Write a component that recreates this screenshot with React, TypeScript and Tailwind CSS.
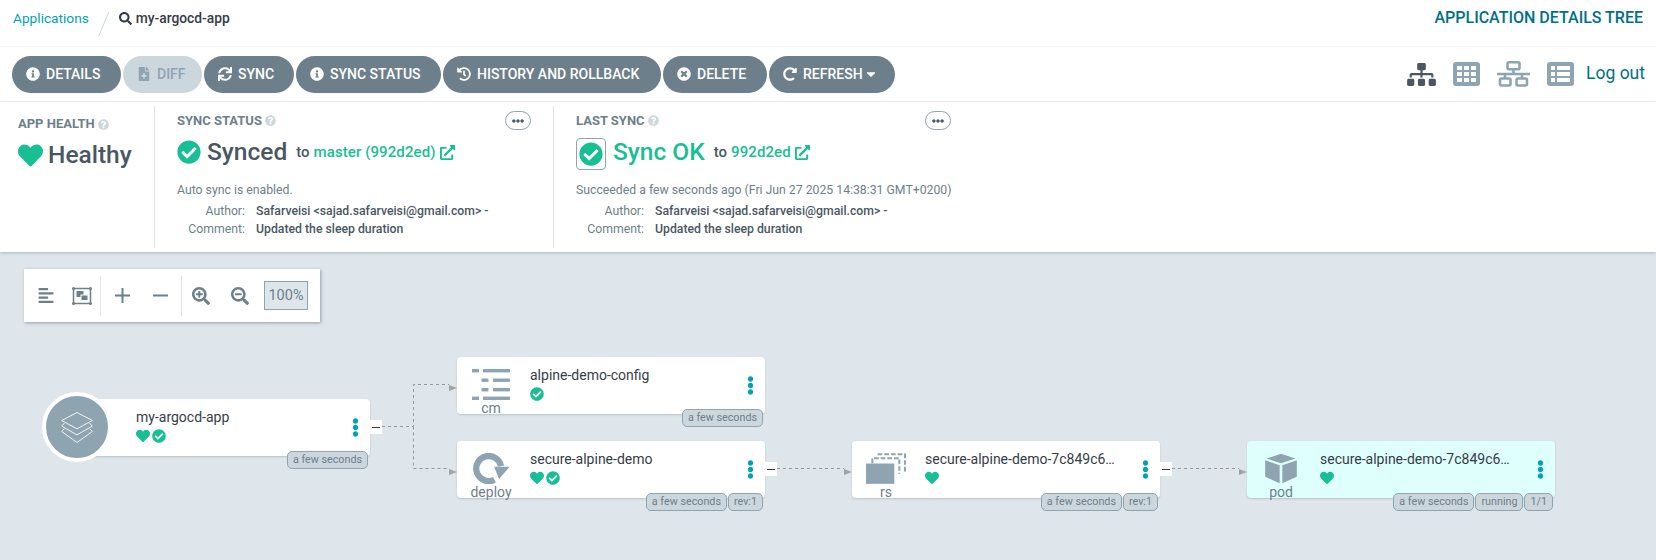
import type { ReactNode } from "react";
import type { IconType } from "react-icons";
import {
	FaAlignLeft,
	FaCaretDown,
	FaCheckCircle,
	FaEllipsisH,
	FaEllipsisV,
	FaExternalLinkAlt,
	FaFileMedical,
	FaHeart,
	FaHistory,
	FaInfoCircle,
	FaQuestionCircle,
	FaRedoAlt,
	FaSearch,
	FaSearchMinus,
	FaSearchPlus,
	FaSitemap,
	FaSync,
	FaTimesCircle,
} from "react-icons/fa";

const actions: { label: string; icon: IconType; width: string; disabled?: boolean; caret?: boolean }[] = [
	{ label: "DETAILS", icon: FaInfoCircle, width: "w-[109px]" },
	{ label: "DIFF", icon: FaFileMedical, width: "w-[79px]", disabled: true },
	{ label: "SYNC", icon: FaSync, width: "w-[90px]" },
	{ label: "SYNC STATUS", icon: FaInfoCircle, width: "w-[145px]" },
	{ label: "HISTORY AND ROLLBACK", icon: FaHistory, width: "w-[218px]" },
	{ label: "DELETE", icon: FaTimesCircle, width: "w-[104px]" },
	{ label: "REFRESH", icon: FaRedoAlt, width: "w-[126px]", caret: true },
];

function ActionButton({ label, icon: Icon, width, disabled, caret }: (typeof actions)[0]) {
	return (
		<button
			className={`flex h-[37px] items-center gap-[6px] rounded-full pl-[14px] text-[14px] font-medium ${width} ${
				disabled ? "bg-[#ccd6dd] text-[#8fa4b1]" : "bg-[#6d7f8b] text-white"
			}`}
		>
			<Icon className="h-[14px] w-auto" />
			{label}
			{caret && <FaCaretDown className="-ml-[3px] h-[14px] w-[10px]" />}
		</button>
	);
}

function GridIcon() {
	return (
		<svg viewBox="0 0 27 24" className="ml-[17px] h-[24px] w-[27px]">
			<rect width="27" height="24" rx="3" fill="#8fa4b1" />
			<g fill="#fff">
				<rect x="4" y="4" width="5" height="4" />
				<rect x="11" y="4" width="5" height="4" />
				<rect x="18" y="4" width="5" height="4" />
				<rect x="4" y="10" width="5" height="4" />
				<rect x="11" y="10" width="5" height="4" />
				<rect x="18" y="10" width="5" height="4" />
				<rect x="4" y="16" width="5" height="4" />
				<rect x="11" y="16" width="5" height="4" />
				<rect x="18" y="16" width="5" height="4" />
			</g>
		</svg>
	);
}

function ListIcon() {
	return (
		<svg viewBox="0 0 27 24" className="ml-[17px] h-[24px] w-[27px]">
			<rect width="27" height="24" rx="3" fill="#8fa4b1" />
			<g fill="#fff">
				<rect x="4" y="4" width="4" height="4" />
				<rect x="10" y="4" width="13" height="4" />
				<rect x="4" y="10" width="4" height="4" />
				<rect x="10" y="10" width="13" height="4" />
				<rect x="4" y="16" width="4" height="4" />
				<rect x="10" y="16" width="13" height="4" />
			</g>
		</svg>
	);
}

function NetworkIcon() {
	return (
		<svg viewBox="0 0 33 26" className="ml-[17px] h-[26px] w-[33px]" fill="none" stroke="#8fa4b1" strokeWidth="2.6">
			<rect x="10.5" y="1.3" width="12" height="7" rx="1.5" />
			<path d="M16.5 8v5M8 17v-4M25 17v-4M0 13h33" />
			<rect x="3" y="17.5" width="10.5" height="7" rx="1.5" />
			<rect x="19.5" y="17.5" width="10.5" height="7" rx="1.5" />
		</svg>
	);
}

function CubeIcon() {
	return (
		<svg viewBox="0 0 96 94" className="h-[31px] w-[32px]" fill="#8fa4b1">
			<polygon points="48,2 92,17 48,31 4,17" />
			<polygon points="0,22 44,37 44,92 0,72" />
			<polygon points="52,37 96,22 96,72 52,92" />
		</svg>
	);
}

function SectionTitle({ children }: { children: ReactNode }) {
	return (
		<div className="flex items-center gap-[3px] text-[13px] font-bold leading-[16px] text-[#6d7f8b]">
			{children}
			<FaQuestionCircle className="h-[11px] w-[11px] text-[#ccd6dd]" />
		</div>
	);
}

function MoreButton() {
	return (
		<div className="flex h-[19px] w-[26px] items-center justify-center rounded-full border border-[#8fa4b1] text-[#495763]">
			<FaEllipsisH className="h-[12px] w-[12px]" />
		</div>
	);
}

function CommitRows() {
	return (
		<div className="mt-[3px] grid grid-cols-[68px_1fr] gap-x-[11px] text-[12.25px] leading-[18px] text-[#6d7f8b]">
			<div className="text-right">Author:</div>
			<div className="font-medium text-[#495763]">Safarveisi &lt;sajad.safarveisi@gmail.com&gt; -</div>
			<div className="text-right">Comment:</div>
			<div className="font-medium text-[#495763]">Updated the sleep duration</div>
		</div>
	);
}

function Badge({ children }: { children: ReactNode }) {
	return (
		<span className="flex h-[18px] items-center rounded-[5px] border border-[#8fa4b1] bg-[#ccd6dd] px-[5px] text-[10.75px] leading-none whitespace-nowrap text-[#6d7f8b]">
			{children}
		</span>
	);
}

function CollapseBox({ className }: { className: string }) {
	return (
		<div className={`absolute flex h-[14px] w-[12px] items-center justify-center bg-white ${className}`}>
			<div className="h-px w-[8px] bg-[#363c4a]" />
		</div>
	);
}

function ConfigMapIcon() {
	return (
		<svg viewBox="0 0 38 31" className="h-[31px] w-[38px]" fill="#8fa4b1">
			<rect x="0" y="0" width="7" height="3.4" />
			<rect x="11" y="0" width="27" height="3.4" />
			<rect x="9.5" y="9.5" width="7" height="3.4" />
			<rect x="21" y="9.5" width="17" height="3.4" />
			<rect x="9.5" y="19" width="7" height="3.4" />
			<rect x="21" y="19" width="17" height="3.4" />
			<rect x="0" y="27.6" width="7" height="3.4" />
			<rect x="11" y="27.6" width="27" height="3.4" />
		</svg>
	);
}

function DeployIcon() {
	return (
		<svg viewBox="0 0 110 94" className="h-[31px] w-[37px]">
			<path d="M64 81A38 38 0 1 1 84 40" fill="none" stroke="#8fa4b1" strokeWidth="19" />
			<polygon points="63,42 110,42 78,79" fill="#8fa4b1" />
		</svg>
	);
}

function ReplicaSetIcon() {
	return (
		<svg viewBox="0 0 120 92" className="h-[31px] w-[40px]" fill="none" stroke="#8fa4b1" strokeWidth="6" strokeDasharray="14 6">
			<path d="M19 30V15H100V62" />
			<path d="M35 3H117V60" />
			<rect x="0" y="31" width="85" height="61" fill="#8fa4b1" stroke="none" />
		</svg>
	);
}

function GraphNode({
	className,
	icon,
	kind,
	name,
	heart,
	check,
	badges,
}: {
	className: string;
	icon: ReactNode;
	kind: string;
	name: string;
	heart?: boolean;
	check?: boolean;
	badges: string[];
}) {
	return (
		<div className={`absolute flex h-[57px] rounded-[4px] shadow-[0_1px_2px_rgba(77,92,105,0.25)] ${className}`}>
			<div className="flex w-[68px] shrink-0 flex-col items-center pt-[12px]">
				<div className="flex h-[31px] items-center">{icon}</div>
				<div className="mt-[1px] text-[14px] leading-[14px] text-[#6d7f8b]">{kind}</div>
			</div>
			<div className="ml-[5px] min-w-0 w-[190px] pt-[9px]">
				<div className="truncate text-[14px] leading-[18px] text-[#363c4a]">{name}</div>
				<div className="mt-[3px] flex items-center gap-[2px] text-[#18be94]">
					{heart && <FaHeart className="h-[14px] w-[14px]" />}
					{check && <FaCheckCircle className="h-[14px] w-[14px]" />}
				</div>
			</div>
			<div className="ml-auto mr-[10px] flex items-center text-[#00a2b3]">
				<FaEllipsisV className="h-[19px] w-[9px]" />
			</div>
			<div className="absolute right-[2px] top-[52px] flex gap-[1px]">
				{badges.map((b) => (
					<Badge key={b}>{b}</Badge>
				))}
			</div>
		</div>
	);
}

function Edges() {
	const line = { fill: "none", stroke: "#999", strokeWidth: 1, strokeDasharray: "3 3" };
	return (
		<svg className="absolute left-0 top-0 h-[308px] w-[1656px]">
			<path d="M382 174.5H413.5V132.5H449" {...line} />
			<path d="M413.5 174.5V216.5H449" {...line} />
			<path d="M777 216.5H844" {...line} />
			<path d="M1172 216.5H1239" {...line} />
			<polygon points="449,133 457,136 449,139" fill="#a3a3a3" />
			<polygon points="449,217 457,220 449,223" fill="#a3a3a3" />
			<polygon points="844,217 852,220 844,223" fill="#a3a3a3" />
			<polygon points="1239,217 1247,220 1239,223" fill="#a3a3a3" />
		</svg>
	);
}

export default function App() {
	return (
		<div className="flex h-[560px] flex-col overflow-hidden bg-white font-[Roboto,sans-serif]">
			<div className="flex h-[47px] shrink-0 items-center border-b border-[#eff3f5] pb-[10px] pl-[13px] pr-[13px]">
				<a className="text-[13.7px] text-[#00a2b3]">Applications</a>
				<svg className="mx-[9px] mt-[10px] h-[25px] w-[12px]" viewBox="0 0 12 25">
					<path d="M1 24.5L11 .5" stroke="#ccd6dd" strokeWidth="1" />
				</svg>
				<FaSearch className="h-[13px] w-[13px] text-[#363c4a]" />
				<span className="ml-[4px] text-[13.8px] font-medium text-[#363c4a]">my-argocd-app</span>
				<span className="ml-auto text-[16px] font-medium text-[#006f8a]">APPLICATION DETAILS TREE</span>
			</div>

			<div className="flex h-[55px] shrink-0 items-center gap-[2px] border-b border-[#eff3f5] pl-[12px] pr-[11px]">
				{actions.map((a) => (
					<ActionButton key={a.label} {...a} />
				))}
				<div className="ml-auto flex items-center">
					<FaSitemap className="h-[23px] w-[29px] text-[#495763]" />
					<GridIcon />
					<NetworkIcon />
					<ListIcon />
					<span className="ml-[12px] pb-[2px] text-[17.5px] text-[#006f8a]">Log out</span>
				</div>
			</div>

			<div className="z-10 flex h-[150px] shrink-0 bg-white py-[4px] shadow-[0_1px_3px_rgba(77,92,105,0.35)]">
				<div className="w-[155px] shrink-0 border-r border-[#dee6eb] pl-[18px] pt-[10px]">
					<SectionTitle>APP HEALTH</SectionTitle>
					<div className="mt-[6px] flex items-center gap-[5px] text-[24.5px] font-medium leading-[34px] text-[#495763]">
						<FaHeart className="h-[25px] w-[25px] text-[#18be94]" />
						Healthy
					</div>
				</div>

				<div className="w-[399px] shrink-0 border-r border-[#dee6eb] pl-[22px] pr-[22px] pt-[5px]">
					<div className="flex items-center justify-between">
						<SectionTitle>SYNC STATUS</SectionTitle>
						<MoreButton />
					</div>
					<div className="mt-[5px] flex h-[34px] items-center text-[#495763]">
						<FaCheckCircle className="h-[24px] w-[24px] text-[#18be94]" />
						<span className="ml-[6px] text-[24.5px] font-medium">Synced</span>
						<span className="ml-[9px] text-[15px] font-medium">to</span>
						<span className="ml-[4px] text-[15px] font-medium tracking-[0.1px] text-[#18be94]">master (992d2ed)</span>
						<FaExternalLinkAlt className="ml-[4px] h-[15px] w-[15px] text-[#18be94]" />
					</div>
					<div className="mt-[12px] text-[12.25px] leading-[18px] text-[#6d7f8b]">Auto sync is enabled.</div>
					<CommitRows />
				</div>

				<div className="w-[398px] shrink-0 pl-[22px] pr-[1px] pt-[5px]">
					<div className="flex items-center justify-between">
						<SectionTitle>LAST SYNC</SectionTitle>
						<MoreButton />
					</div>
					<div className="mt-[6px] flex h-[36px] items-center text-[#495763]">
						<div className="flex h-[32px] w-[30px] items-center justify-center rounded-[4px] border border-[#8fa4b1]">
							<FaCheckCircle className="h-[24px] w-[24px] text-[#18be94]" />
						</div>
						<div className="flex items-center pb-[3px]">
							<span className="ml-[7px] text-[24.5px] font-medium text-[#18be94]">Sync OK</span>
							<span className="ml-[9px] text-[15px] font-medium">to</span>
							<span className="ml-[4px] text-[15px] font-medium tracking-[0.1px] text-[#18be94]">992d2ed</span>
							<FaExternalLinkAlt className="ml-[4px] h-[15px] w-[15px] text-[#18be94]" />
						</div>
					</div>
					<div className="mt-[9px] text-[12.25px] leading-[18px] whitespace-nowrap text-[#6d7f8b]">
						Succeeded a few seconds ago (Fri Jun 27 2025 14:38:31 GMT+0200)
					</div>
					<CommitRows />
				</div>
			</div>

			<div className="relative flex-1 bg-[#dee6eb]">
				<div className="absolute left-[24px] top-[17px] flex h-[53px] w-[296px] items-center bg-white text-[#6d7f8b] shadow-[1px_1px_3px_rgba(77,92,105,0.5)]">
					<FaAlignLeft className="ml-[14px] h-[17px] w-[16px]" />
					<svg viewBox="0 0 20 18" className="ml-[18px] h-[18px] w-[20px]" fill="none" stroke="#6d7f8b" strokeWidth="1.5">
						<rect x="1.5" y="1.5" width="17" height="15" />
						<g fill="#6d7f8b" stroke="none">
							<circle cx="1.5" cy="1.5" r="1.5" />
							<circle cx="18.5" cy="1.5" r="1.5" />
							<circle cx="1.5" cy="16.5" r="1.5" />
							<circle cx="18.5" cy="16.5" r="1.5" />
							<rect x="4.5" y="4" width="7" height="6" />
						</g>
						<rect x="9" y="8" width="7" height="5.5" fill="#6d7f8b" stroke="#fff" strokeWidth="1" />
					</svg>
					<div className="ml-[8px] h-[40px] w-px bg-[#dee6eb]" />
					<svg viewBox="0 0 15 15" className="ml-[14px] h-[15px] w-[15px]" stroke="#6d7f8b" strokeWidth="2">
						<path d="M0 7.5H15M7.5 0V15" />
					</svg>
					<svg viewBox="0 0 15 15" className="ml-[23px] h-[15px] w-[15px]" stroke="#6d7f8b" strokeWidth="2">
						<path d="M0 7.5H15" />
					</svg>
					<div className="ml-[13px] h-[40px] w-px bg-[#dee6eb]" />
					<FaSearchPlus className="ml-[10px] h-[18px] w-[18px]" />
					<FaSearchMinus className="ml-[21px] h-[18px] w-[18px]" />
					<div className="ml-[15px] flex h-[29px] w-[44px] items-center justify-center border border-[#8fa4b1] bg-[#dee6eb] text-[14.5px]">
						100%
					</div>
				</div>

				<Edges />

				<div className="absolute left-[42px] top-[140px] z-10 flex h-[70px] w-[70px] items-center justify-center rounded-full border-[4px] border-white bg-[#8fa4b1]">
					<svg viewBox="0 0 96 92" className="h-[31px] w-[32px]" fill="none" stroke="#fff" strokeWidth="2.6" strokeLinejoin="round">
						<path d="M48 1L94 25L48 50L2 25Z" />
						<path d="M10 33L2 42L48 68L94 42L86 33" />
						<path d="M10 50L2 58L48 91L94 58L86 50" />
					</svg>
				</div>
				<GraphNode
					className="left-[63px] top-[147px] w-[307px] bg-white"
					icon={null}
					kind=""
					name="my-argocd-app"
					heart
					check
					badges={["a few seconds"]}
				/>
				<CollapseBox className="left-[370px] top-[168px]" />

				<GraphNode
					className="left-[457px] top-[105px] w-[308px] bg-white"
					icon={<ConfigMapIcon />}
					kind="cm"
					name="alpine-demo-config"
					check
					badges={["a few seconds"]}
				/>
				<GraphNode
					className="left-[457px] top-[189px] w-[308px] bg-white"
					icon={<DeployIcon />}
					kind="deploy"
					name="secure-alpine-demo"
					heart
					check
					badges={["a few seconds", "rev:1"]}
				/>
				<CollapseBox className="left-[765px] top-[210px]" />
				<GraphNode
					className="left-[852px] top-[189px] w-[308px] bg-white"
					icon={<ReplicaSetIcon />}
					kind="rs"
					name="secure-alpine-demo-7c849c6fd5"
					heart
					badges={["a few seconds", "rev:1"]}
				/>
				<CollapseBox className="left-[1160px] top-[210px]" />
				<GraphNode
					className="left-[1247px] top-[189px] w-[308px] bg-[#dffffd]"
					icon={<CubeIcon />}
					kind="pod"
					name="secure-alpine-demo-7c849c6fd5"
					heart
					badges={["a few seconds", "running", "1/1"]}
				/>
			</div>
		</div>
	);
}
